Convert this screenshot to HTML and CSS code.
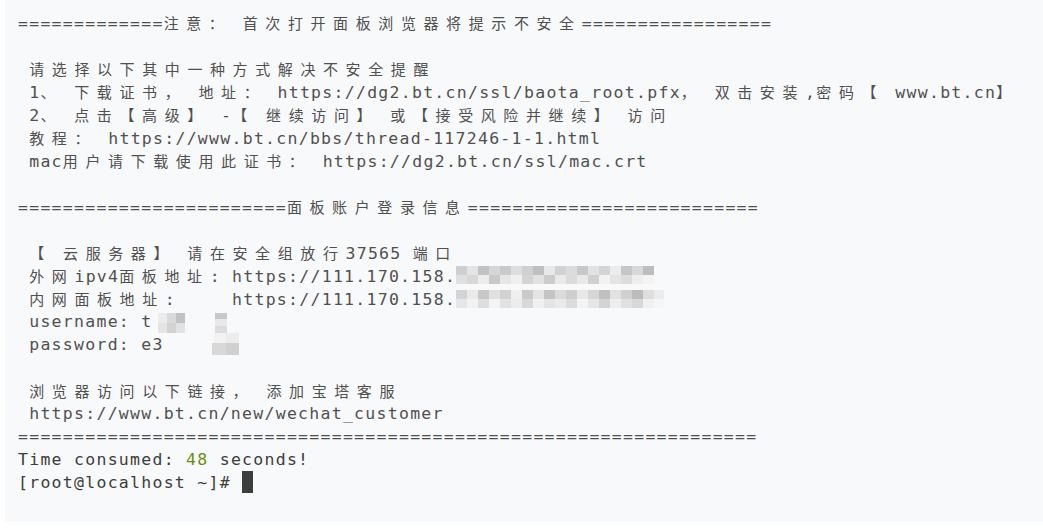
FILE: index.html
```html
<!DOCTYPE html>
<html lang="zh-CN">
<head>
<meta charset="utf-8">
<title>Terminal</title>
<link rel="stylesheet" href="styles.css">
</head>
<body>
<main class="term">
<div class="ln">=============<span class="c">注意：</span> <span class="c">首次打开面板浏览器将提示不安全</span>=================</div>
<div class="ln"> </div>
<div class="ln"> <span class="c">请选择以下其中一种方式解决不安全提醒</span></div>
<div class="ln"> 1<span class="c">、</span> <span class="c">下载证书，</span> <span class="c">地址：</span> https://dg2.bt.cn/ssl/baota_root.pfx<span class="c">，</span> <span class="c">双击安装</span>,<span class="c">密码【</span> www.bt.cn<span class="c">】</span></div>
<div class="ln"> 2<span class="c">、</span> <span class="c">点击【高级】</span> -<span class="c">【</span> <span class="c">继续访问】</span> <span class="c">或【接受风险并继续】</span> <span class="c">访问</span></div>
<div class="ln"> <span class="c">教程：</span> https://www.bt.cn/bbs/thread-117246-1-1.html</div>
<div class="ln"> mac<span class="c">用户请下载使用此证书：</span> https://dg2.bt.cn/ssl/mac.crt</div>
<div class="ln"> </div>
<div class="ln">========================<span class="c">面板账户登录信息</span>==========================</div>
<div class="ln"> </div>
<div class="ln"> <span class="c">【</span> <span class="c">云服务器】</span> <span class="c">请在安全组放行</span>37565 <span class="c">端口</span></div>
<div class="ln"> <span class="c">外网</span>ipv4<span class="c">面板地址</span>: https://111.170.158.<svg class="mosaic" width="200" height="21" viewBox="0 0 200 21"><g><rect x="0" y="2" width="11" height="9" fill="#cfcfcf"/><rect x="11" y="2" width="11" height="9" fill="#e4e4e4"/><rect x="22" y="2" width="11" height="9" fill="#c2c2c2"/><rect x="33" y="2" width="11" height="9" fill="#d6d6d6"/><rect x="44" y="2" width="11" height="9" fill="#cacaca"/><rect x="55" y="2" width="11" height="9" fill="#dedede"/><rect x="66" y="2" width="11" height="9" fill="#d0d0d0"/><rect x="77" y="2" width="11" height="9" fill="#bfbfbf"/><rect x="88" y="2" width="11" height="9" fill="#e8e8e8"/><rect x="99" y="2" width="11" height="9" fill="#d2d2d2"/><rect x="110" y="2" width="11" height="9" fill="#dcdcdc"/><rect x="121" y="2" width="11" height="9" fill="#c8c8c8"/><rect x="132" y="2" width="11" height="9" fill="#e2e2e2"/><rect x="143" y="2" width="11" height="9" fill="#d4d4d4"/><rect x="154" y="2" width="11" height="9" fill="#ececec"/><rect x="165" y="2" width="11" height="9" fill="#c6c6c6"/><rect x="176" y="2" width="11" height="9" fill="#d8d8d8"/><rect x="187" y="2" width="11" height="9" fill="#bdbdbd"/></g><g><rect x="0" y="11" width="11" height="9" fill="#e0e0e0"/><rect x="11" y="11" width="11" height="9" fill="#d8d8d8"/><rect x="22" y="11" width="11" height="9" fill="#ececec"/><rect x="33" y="11" width="11" height="9" fill="#c9c9c9"/><rect x="44" y="11" width="11" height="9" fill="#e6e6e6"/><rect x="55" y="11" width="11" height="9" fill="#f0f0f0"/><rect x="66" y="11" width="11" height="9" fill="#d4d4d4"/><rect x="77" y="11" width="11" height="9" fill="#e2e2e2"/><rect x="88" y="11" width="11" height="9" fill="#cccccc"/><rect x="99" y="11" width="11" height="9" fill="#eaeaea"/><rect x="110" y="11" width="11" height="9" fill="#dadada"/><rect x="121" y="11" width="11" height="9" fill="#e8e8e8"/><rect x="132" y="11" width="11" height="9" fill="#d0d0d0"/><rect x="143" y="11" width="11" height="9" fill="#f2f2f2"/><rect x="154" y="11" width="11" height="9" fill="#e4e4e4"/><rect x="165" y="11" width="11" height="9" fill="#dcdcdc"/><rect x="176" y="11" width="11" height="9" fill="#eeeeee"/><rect x="187" y="11" width="11" height="9" fill="#f4f4f4"/></g></svg></div>
<div class="ln"> <span class="c">内网面板地址</span>:     https://111.170.158.<svg class="mosaic" width="210" height="21" viewBox="0 0 210 21"><g><rect x="0" y="3" width="11" height="9" fill="#d4d4d4"/><rect x="11" y="3" width="11" height="9" fill="#eaeaea"/><rect x="22" y="3" width="11" height="9" fill="#c8c8c8"/><rect x="33" y="3" width="11" height="9" fill="#e0e0e0"/><rect x="44" y="3" width="11" height="9" fill="#d2d2d2"/><rect x="55" y="3" width="11" height="9" fill="#f0f0f0"/><rect x="66" y="3" width="11" height="9" fill="#cacaca"/><rect x="77" y="3" width="11" height="9" fill="#e4e4e4"/><rect x="88" y="3" width="11" height="9" fill="#c4c4c4"/><rect x="99" y="3" width="11" height="9" fill="#dadada"/><rect x="110" y="3" width="11" height="9" fill="#cecece"/><rect x="121" y="3" width="11" height="9" fill="#e8e8e8"/><rect x="132" y="3" width="11" height="9" fill="#d6d6d6"/><rect x="143" y="3" width="11" height="9" fill="#c0c0c0"/><rect x="154" y="3" width="11" height="9" fill="#e2e2e2"/><rect x="165" y="3" width="11" height="9" fill="#d0d0d0"/><rect x="176" y="3" width="11" height="9" fill="#bcbcbc"/><rect x="187" y="3" width="11" height="9" fill="#dedede"/><rect x="198" y="3" width="10" height="9" fill="#ececec"/></g><g><rect x="0" y="12" width="11" height="9" fill="#e6e6e6"/><rect x="11" y="12" width="11" height="9" fill="#f2f2f2"/><rect x="22" y="12" width="11" height="9" fill="#dedede"/><rect x="33" y="12" width="11" height="9" fill="#f4f4f4"/><rect x="44" y="12" width="11" height="9" fill="#e2e2e2"/><rect x="55" y="12" width="11" height="9" fill="#ececec"/><rect x="66" y="12" width="11" height="9" fill="#d8d8d8"/><rect x="77" y="12" width="11" height="9" fill="#f0f0f0"/><rect x="88" y="12" width="11" height="9" fill="#e4e4e4"/><rect x="99" y="12" width="11" height="9" fill="#eaeaea"/><rect x="110" y="12" width="11" height="9" fill="#dcdcdc"/><rect x="121" y="12" width="11" height="9" fill="#f4f4f4"/><rect x="132" y="12" width="11" height="9" fill="#e6e6e6"/><rect x="143" y="12" width="11" height="9" fill="#d4d4d4"/><rect x="154" y="12" width="11" height="9" fill="#eeeeee"/><rect x="165" y="12" width="11" height="9" fill="#e0e0e0"/><rect x="176" y="12" width="11" height="9" fill="#d8d8d8"/><rect x="187" y="12" width="11" height="9" fill="#f0f0f0"/><rect x="198" y="12" width="10" height="9" fill="#f6f6f6"/></g></svg></div>
<div class="ln"> username: t<svg class="mosaic" width="75" height="23" viewBox="0 0 75 23"><rect x="6" y="3" width="9" height="10" fill="#ececec"/><rect x="15" y="3" width="9" height="10" fill="#dadada"/><rect x="24" y="3" width="9" height="10" fill="#c2c2c2"/><rect x="6" y="13" width="9" height="10" fill="#e4e4e4"/><rect x="15" y="13" width="9" height="10" fill="#d2d2d2"/><rect x="24" y="13" width="9" height="10" fill="#e2e2e2"/><rect x="63" y="3" width="12" height="6" fill="#c8c8c8"/><rect x="63" y="9" width="12" height="7" fill="#e8e8e8"/><rect x="63" y="16" width="12" height="7" fill="#dcdcdc"/></svg></div>
<div class="ln"> password: e3<svg class="mosaic" width="75" height="23" viewBox="0 0 75 23"><rect x="50" y="0" width="12" height="10" fill="#f2f2f2"/><rect x="62" y="0" width="13" height="10" fill="#ececec"/><rect x="48" y="10" width="14" height="12" fill="#d8d8d8"/><rect x="62" y="10" width="13" height="12" fill="#d0d0d0"/></svg></div>
<div class="ln"> </div>
<div class="ln"> <span class="c">浏览器访问以下链接，</span> <span class="c">添加宝塔客服</span></div>
<div class="ln"> https://www.bt.cn/new/wechat_customer</div>
<div class="ln">==================================================================</div>
<div class="ln dark">Time consumed: <span class="num">48</span> seconds!</div>
<div class="ln dark">[root@localhost ~]# <span class="cursor"></span></div>
</main>
</body>
</html>
```

FILE: styles.css
```css
html, body {
  margin: 0;
  padding: 0;
  background: #ffffff;
}

.term {
  box-sizing: border-box;
  height: 521px;
  margin: 0 0 7px 5px;
  padding: 11px 0 0 13px;
  background: #f8f9fb;
  font-family: "DejaVu Sans Mono", "Noto Sans CJK SC", monospace;
  font-size: 16.5px;
  letter-spacing: 1.27px;
  color: #505050;
  overflow: hidden;
}

.ln {
  height: 23px;
  line-height: 23px;
  white-space: pre;
}

.c {
  font-family: "Noto Sans CJK SC", sans-serif;
  font-size: 15px;
  letter-spacing: 7.6px;
}

.mosaic {
  display: inline-block;
  vertical-align: top;
}

.dark {
  color: #3c3c3c;
}

.num {
  color: #6b8e10;
}

.cursor {
  display: inline-block;
  width: 11px;
  height: 22px;
  vertical-align: top;
  background: #3d3d3d;
}
```
